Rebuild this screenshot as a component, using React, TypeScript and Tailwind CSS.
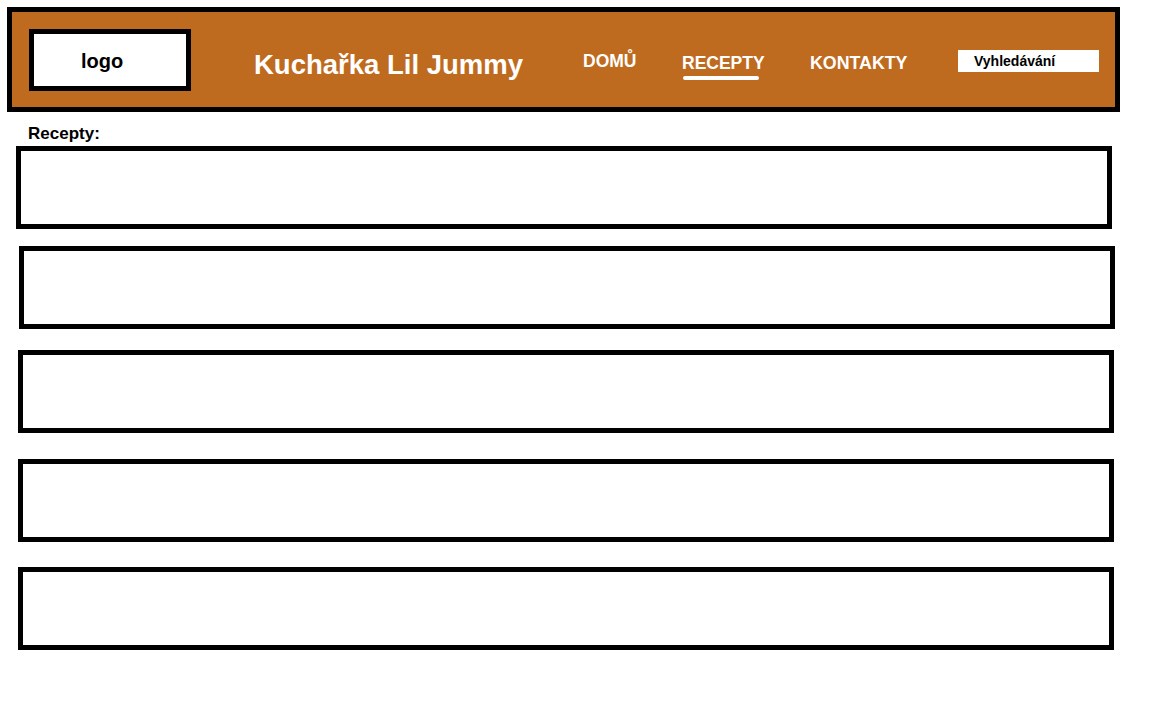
export default function App() {
  const boxes = [
    { key: 1, cls: 'mt-[4px] ml-[16px]' },
    { key: 2, cls: 'mt-[17px] ml-[19px]' },
    { key: 3, cls: 'mt-[21px] ml-[18px]' },
    { key: 4, cls: 'mt-[26px] ml-[18px]' },
    { key: 5, cls: 'mt-[25px] ml-[18px]' },
  ];

  return (
    <div className="min-h-[720px] w-[1152px] bg-white pt-[7px] font-['Liberation_Sans',Arial,sans-serif]">
      {/* header */}
      <header className="ml-[7px] flex h-[105px] w-[1113px] items-start border-[5px] border-black bg-[#bf6b1f]">
        <div className="ml-[17px] mt-[17px] flex h-[62px] w-[162px] shrink-0 items-center border-[5px] border-black bg-white pl-[47px] pt-[2px]">
          <span className="text-[20px] font-bold text-black">logo</span>
        </div>

        <div className="ml-[63px] mt-[32px] w-[329px] shrink-0">
          <h1 className="text-[27.5px] font-bold leading-normal text-white">Kuchařka Lil Jummy</h1>
        </div>

        <nav className="flex items-start">
          <a className="mt-[36px] w-[99px] shrink-0 text-[17.5px] font-bold leading-normal text-white">DOMŮ</a>
          <div className="mt-[38px] w-[128px] shrink-0">
            <a className="block text-[17.5px] font-bold leading-normal text-white">RECEPTY</a>
            <div className="ml-[1px] h-[4px] w-[76px] rounded-full bg-white" />
          </div>
          <a className="mt-[38px] w-[148px] shrink-0 text-[17.8px] font-bold leading-normal text-white">KONTAKTY</a>
        </nav>

        <div className="mt-[38px] h-[22px] w-[141px] shrink-0 bg-white pl-[16px] text-[14px] font-bold leading-[22px] text-black">
          Vyhledávání
        </div>
      </header>

      {/* recipes */}
      <h2 className="ml-[28px] mt-[13px] text-[17px] font-bold leading-[17px] text-black">Recepty:</h2>

      <div className="flex flex-col items-start">
        {boxes.map((b) => (
          <div key={b.key} className={`h-[83px] w-[1096px] border-[5px] border-black bg-white ${b.cls}`} />
        ))}
      </div>
    </div>
  );
}
